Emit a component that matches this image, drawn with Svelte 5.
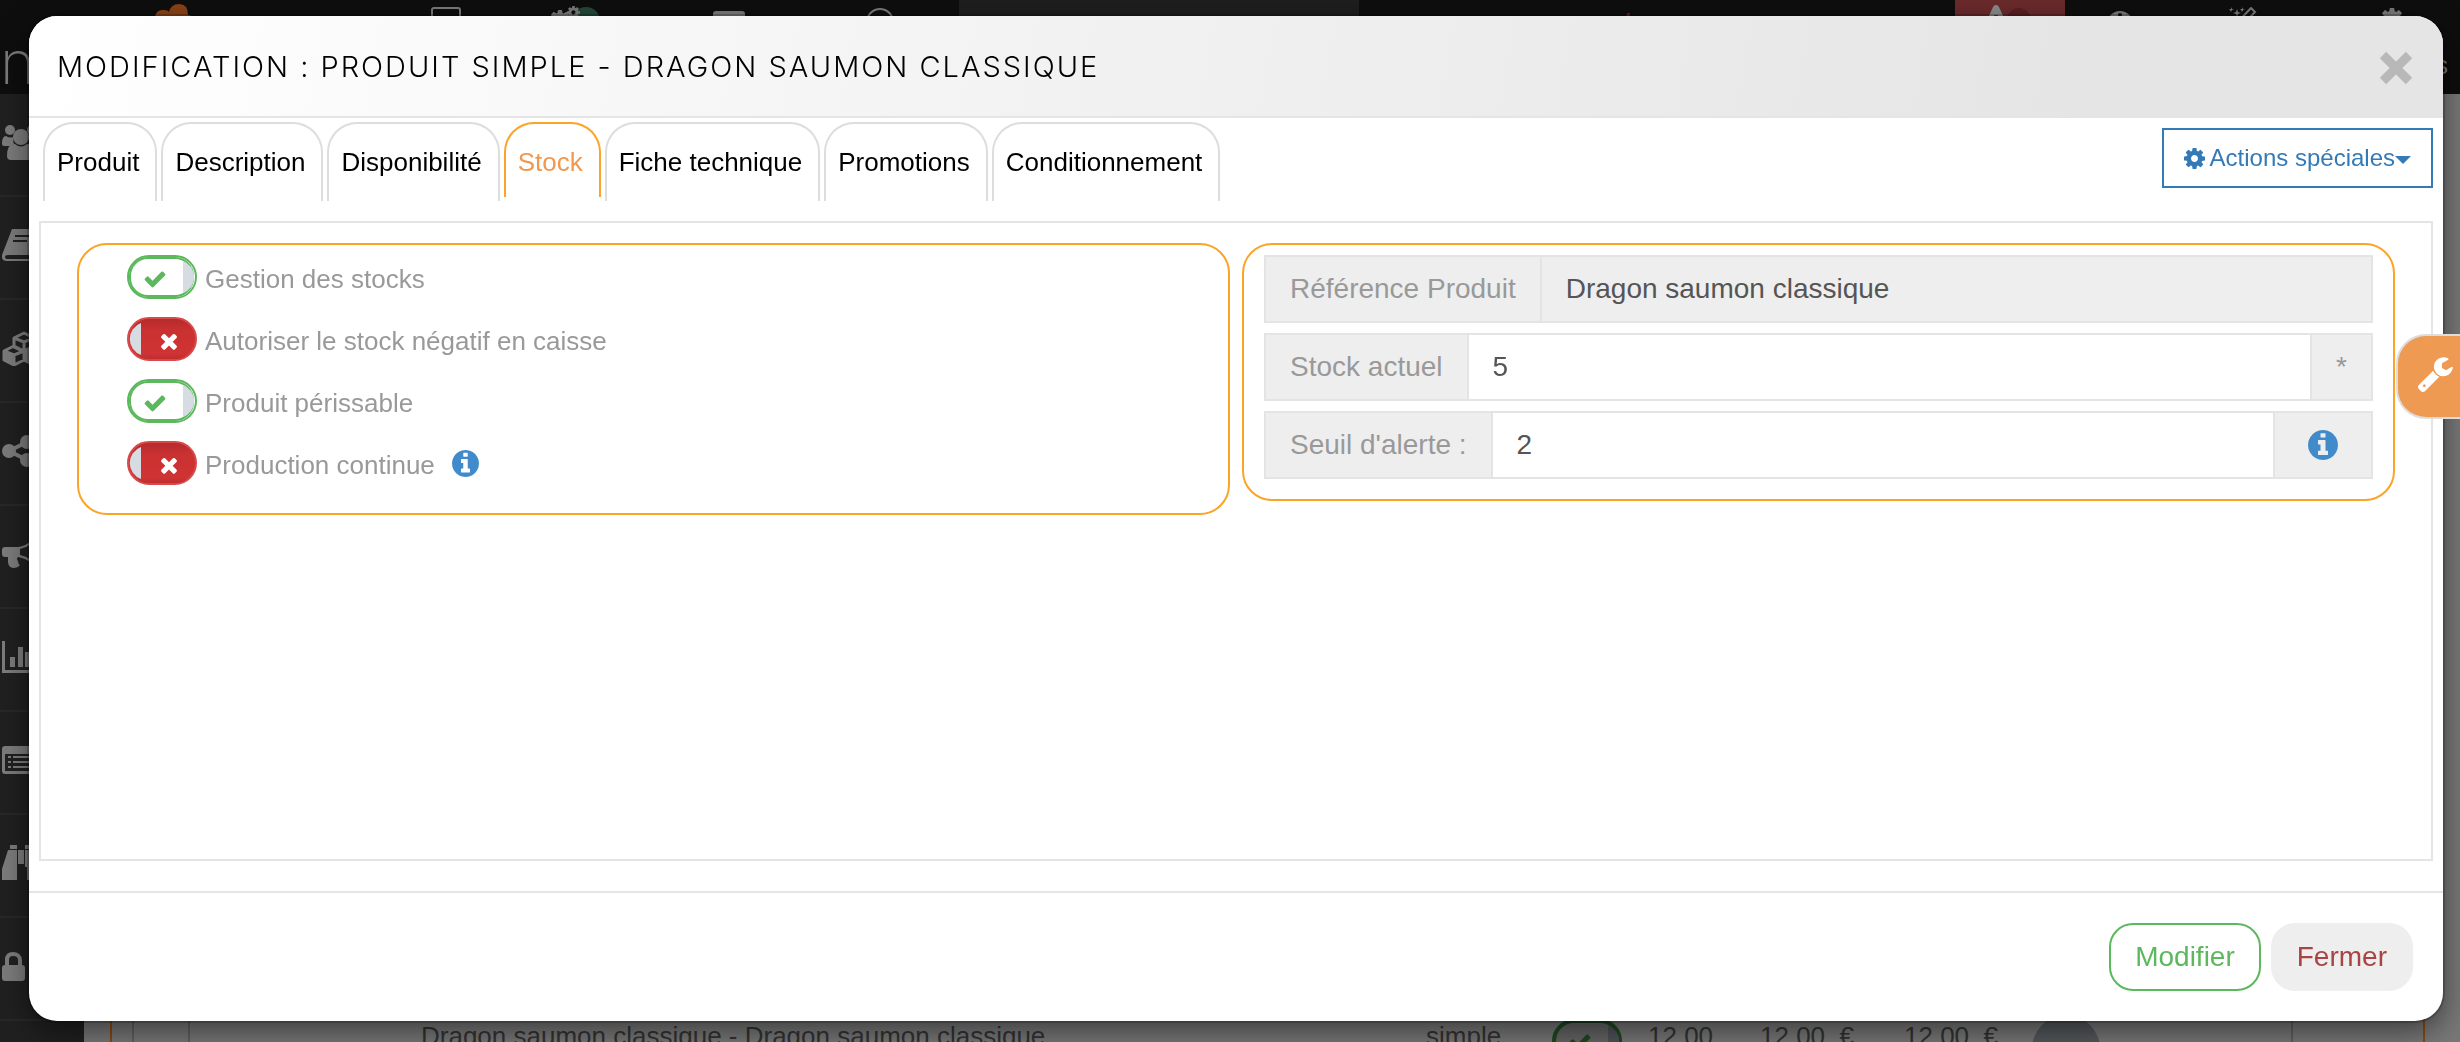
<script lang="ts">
  const icons = {
    check: 'M1671 566q0 40-28 68l-724 724-136 136q-28 28-68 28t-68-28l-136-136-362-362q-28-28-28-68t28-68l136-136q28-28 68-28t68 28l294 295 656-657q28-28 68-28t68 28l136 136q28 28 28 68z',
    times: 'M1490 1322q0 40-28 68l-136 136q-28 28-68 28t-68-28l-294-294-294 294q-28 28-68 28t-68-28l-136-136q-28-28-28-68t28-68l294-294-294-294q-28-28-28-68t28-68l136-136q28-28 68-28t68 28l294 294 294-294q28-28 68-28t68 28l136 136q28 28 28 68t-28 68l-294 294 294 294q28 28 28 68z',
    info: 'M1152 1376v-160q0-14-9-23t-23-9h-96v-512q0-14-9-23t-23-9h-320q-14 0-23 9t-9 23v160q0 14 9 23t23 9h96v320h-96q-14 0-23 9t-9 23v160q0 14 9 23t23 9h448q14 0 23-9t9-23zm-128-896v-160q0-14-9-23t-23-9h-192q-14 0-23 9t-9 23v160q0 14 9 23t23 9h192q14 0 23-9t9-23zm640 416q0 209-103 385.5t-279.5 279.5-385.5 103-385.5-103-279.5-279.5-103-385.5 103-385.5 279.5-279.5 385.5-103 385.5 103 279.5 279.5 103 385.5z',
    cog: 'M1152 896q0-106-75-181t-181-75-181 75-75 181 75 181 181 75 181-75 75-181zm512-109v222q0 12-8 23t-20 13l-185 28q-19 54-39 91 35 50 107 138 10 12 10 25t-9 23q-27 37-99 108t-94 71q-12 0-26-9l-138-108q-44 23-91 38-16 136-29 186-7 28-36 28h-222q-14 0-24.5-8.5t-11.5-21.5l-28-184q-49-16-90-37l-141 107q-10 9-25 9-14 0-25-11-126-114-165-168-7-10-7-23 0-12 8-23 15-21 51-66.5t54-70.5q-27-50-41-99l-183-27q-13-2-21-12.5t-8-23.5v-222q0-12 8-23t19-13l186-28q14-46 39-92-40-57-107-138-10-12-10-24 0-10 9-23 26-36 98.5-107.5t94.5-71.5q13 0 26 10l138 107q44-23 91-38 16-136 29-186 7-28 36-28h222q14 0 24.5 8.5t11.5 21.5l28 184q49 16 90 37l142-107q9-9 24-9 13 0 25 10 129 119 165 170 7 8 7 22 0 12-8 23-15 21-51 66.5t-54 70.5q26 50 41 98l183 28q13 2 21 12.5t8 23.5z',
    wrench: 'M448 1472q0-26-19-45t-45-19-45 19-19 45 19 45 45 19 45-19 19-45zm644-420l-682 682q-37 37-90 37-52 0-91-37l-106-108q-38-36-38-90 0-53 38-91l681-681q39 98 114.5 173.5t173.5 114.5zm634-435q0 39-23 106-47 134-164.5 217.5t-258.5 83.5q-185 0-316.5-131.5t-131.5-316.5 131.5-316.5 316.5-131.5q58 0 121.5 16.5t107.5 46.5q16 11 16 28t-16 28l-293 169v224l193 107q5-3 79-48.5t135.5-81 70.5-35.5q15 0 23.5 10t8.5 25z',
  };

  const tabs = ['Produit', 'Description', 'Disponibilité', 'Stock', 'Fiche technique', 'Promotions', 'Conditionnement'];
  let activeTab: string = $state('Stock');

  let options = $state([
    { label: 'Gestion des stocks', on: true, info: false },
    { label: 'Autoriser le stock négatif en caisse', on: false, info: false },
    { label: 'Produit périssable', on: true, info: false },
    { label: 'Production continue', on: false, info: true },
  ]);

  let reference = $state('Dragon saumon classique');
  let stock = $state('5');
  let threshold = $state('2');

  const menu = ['users', 'book', 'cubes', 'share', 'bullhorn', 'chart', 'list', 'binoculars', 'lock'];
</script>

{#snippet infoIcon(size: number)}
  <svg width={size} height={size} viewBox="128 128 1536 1536" fill="#428bca" aria-hidden="true"><path d={icons.info} /></svg>
{/snippet}

{#snippet switchArt(on: boolean)}
  <svg width="70" height="44" viewBox="0 0 70 44" aria-hidden="true">
    <defs>
      <linearGradient id="off" x1="0" y1="0" x2="0" y2="1">
        <stop offset="0" stop-color="#b32b2b" />
        <stop offset=".3" stop-color="#cb3131" />
        <stop offset=".85" stop-color="#d03333" />
        <stop offset="1" stop-color="#bb2d2d" />
      </linearGradient>
    </defs>
    {#if on}
      <rect x="1" y="1" width="68" height="42" rx="21" fill="#fff" stroke="#5cb85c" stroke-width="2" />
      <rect x="3" y="3" width="63" height="38" rx="18" fill="none" stroke="#5cb85c" stroke-width="2" />
      <path d="M56 6A17 17 0 0 1 56 38Z" fill="#d6dce2" />
      <svg x="16" y="12" width="24" height="24" viewBox="0 0 1792 1792"><path d={icons.check} fill="#5cb85c" /></svg>
    {:else}
      <rect x="1" y="1" width="68" height="42" rx="21" fill="url(#off)" stroke="#d9494b" stroke-width="2" />
      <path d="M14 6A17 17 0 0 0 14 38Z" fill="#d6dce2" />
      <svg x="30" y="12" width="24" height="24" viewBox="0 0 1792 1792"><path d={icons.times} fill="#fff" /></svg>
    {/if}
  </svg>
{/snippet}

{#snippet menuIcon(name: string)}
  <svg width="48" height="36" viewBox="0 0 48 36" fill="#7c7c7c" aria-hidden="true">
    {#if name === 'users'}
      <circle cx="8" cy="6" r="5" /><path d="M0 20q0-8 4-8 5 3 9 0-3 4-1 8l-4 2H2q-2 0-2-2z" />
      <circle cx="19" cy="13" r="8" /><path d="M5 32q0-13 8-12 6 5 12 0 8-1 8 12 0 4-4 4H9q-4 0-4-4z" />
      <circle cx="30" cy="6" r="5" />
    {:else if name === 'book'}
      <path d="M10 2h28l-8 26H6q-3 0-3 2t3 2h28v2H5q-6 0-5-6z" />
      <path d="M13 9h14M11 14h14" stroke="#202020" stroke-width="2" />
    {:else if name === 'cubes'}
      <g fill="none" stroke="#7c7c7c" stroke-width="3" stroke-linejoin="round">
        <path d="M12 8l10-5 10 5v9l-10 5-10-5zM12 8l10 4 10-4M22 12v9M2 21l10-5 10 5v9l-10 5-10-5zM2 21l10 4 10-4M12 25v9M22 21l10-5 10 5v9l-10 5-10-5zM22 21l10 4 10-4" />
      </g>
      <path d="M2 21l10 4v9L2 30zM22 21l10 4v9l-10-4z" />
    {:else if name === 'share'}
      <circle cx="7" cy="18" r="7" /><circle cx="25" cy="9" r="7" /><circle cx="25" cy="27" r="7" />
      <path d="M25 9L7 18l18 9" fill="none" stroke="#7c7c7c" stroke-width="4" />
    {:else if name === 'bullhorn'}
      <path d="M3 11h13q8-1 16-8v26q-8-7-16-8-2 2 0 4 0 3 2 4-2 3-7 3-6 0-5-11H3q-3 0-3-3v-4q0-3 3-3z" />
      <path d="M18 13q6-1 11-5v16q-5-4-11-5z" fill="#202020" />
    {:else if name === 'chart'}
      <path d="M0 2h3v29h40v3H0zM8 18h5v10H8zM16 8h5v20h-5zM23 13h5v15h-5z" />
    {:else if name === 'list'}
      <path d="M3 4h34v28H3q-3 0-3-3V7q0-3 3-3zm0 8v17h34V12z" fill-rule="evenodd" />
      <path d="M6 15h3M6 20h3M6 25h3M11 15h24M11 20h24M11 25h24" stroke="#7c7c7c" stroke-width="2" />
    {:else if name === 'binoculars'}
      <path d="M8 0h7v4H8zM23 0h7v4h-7zM6 5h9v30H0V24zM16 5h6v14h-6zM23 5h9l6 19v11H25V22h-2z" />
    {:else}
      <path d="M0 20q0-3 3-3v-5q0-8 8-8t9 8v5q3 0 3 3v10q0 3-3 3H3q-3 0-3-3zm7-3h9v-5q0-4-5-4-4 0-4 4z" fill-rule="evenodd" />
    {/if}
  </svg>
{/snippet}

<div class="page">
  <header class="topbar">
    <div class="logo">
      <svg width="40" height="36" viewBox="0 0 40 36" fill="#8a4216" aria-hidden="true"><path d="M0 12q2-7 9-6 4 0 5 2 2-8 10-8 9 0 9 11 7 1 7 7v12H0z" /></svg>
      <span>n</span>
    </div>
    <div class="screen"><svg width="30" height="30" viewBox="0 0 30 30" fill="none" stroke="#7a7a7a" stroke-width="2" aria-hidden="true"><rect x="1" y="1" width="28" height="20" rx="2" /></svg></div>
    <div class="jobs">
      <svg width="52" height="30" viewBox="0 0 52 30" aria-hidden="true">
        <circle cx="37" cy="15" r="14" fill="#23483a" />
        <svg y="4" width="22" height="22" viewBox="128 128 1536 1536"><path d={icons.cog} fill="#7a7a7a" /></svg>
        <svg x="18" width="13" height="13" viewBox="128 128 1536 1536"><path d={icons.cog} fill="#7a7a7a" /></svg>
      </svg>
    </div>
    <div class="card"><svg width="32" height="24" viewBox="0 0 32 24" aria-hidden="true"><rect width="32" height="24" rx="3" fill="#7a7a7a" /></svg></div>
    <div class="round"><svg width="28" height="28" viewBox="0 0 28 28" aria-hidden="true"><circle cx="14" cy="14" r="13" fill="none" stroke="#7a7a7a" stroke-width="2" /></svg></div>
    <div class="search"></div>
    <div class="brand"><svg width="6" height="12" viewBox="0 0 6 12" fill="#7c1414" aria-hidden="true"><path d="M2 0h3L4 12H0z" /></svg></div>
    <div class="alert">
      <svg width="60" height="30" viewBox="0 0 60 30" aria-hidden="true">
        <circle cx="39" cy="15" r="12" fill="#5a1f22" />
        <path d="M16 0q2 0 3 2l11 24H2L13 2q1-2 3-2z" fill="#8a8a8a" />
        <path d="M14 10h4l-1 9h-2z" fill="#6b2a2c" />
      </svg>
    </div>
    <div class="gauge"><svg width="26" height="24" viewBox="0 0 26 24" aria-hidden="true"><circle cx="13" cy="13" r="13" fill="#7a7a7a" /><circle cx="13" cy="4" r="2" fill="#0e0e0e" /><circle cx="5" cy="8" r="2" fill="#0e0e0e" /><circle cx="21" cy="8" r="2" fill="#0e0e0e" /></svg></div>
    <div class="wand">
      <svg width="28" height="28" viewBox="0 0 28 28" aria-hidden="true">
        <path d="M2 0l1 2 2 0-2 1-1 2-1-2-1-1 2 0zM13 0l1 2 2 0-2 1-1 2-1-2-1-1 2 0zM8 2l1 3 3 1-3 1-1 3-1-3-3-1 3-1z" fill="#7a7a7a" />
        <path d="M22 1l4 4L6 26l-4-4z" fill="none" stroke="#7a7a7a" stroke-width="2" />
      </svg>
    </div>
    <div class="settings">
      <svg width="24" height="24" viewBox="128 128 1536 1536" fill="#7a7a7a" aria-hidden="true"><path d={icons.cog} /></svg>
      <span>s</span>
    </div>
  </header>
  <div class="behind">
    <nav class="sidebar" aria-label="Menu">
      {#each menu as item}
        <div class="menuitem">{@render menuIcon(item)}</div>
      {/each}
    </nav>
    <div class="listing">
      <div class="row">
        <span class="edge"></span>
        <span class="tick"></span>
        <span class="name">Dragon saumon classique - Dragon saumon classique</span>
        <span class="kind">simple</span>
        <span class="state">
          <svg width="70" height="44" viewBox="0 0 70 44" aria-hidden="true">
            <rect x="2" y="2" width="66" height="40" rx="20" fill="#666" stroke="#1d4a20" stroke-width="4" />
            <path d="M56 6A17 17 0 0 1 56 38Z" fill="#505458" />
            <svg x="16" y="11" width="24" height="24" viewBox="0 0 1792 1792"><path d={icons.check} fill="#1d4a20" /></svg>
          </svg>
        </span>
        <span class="qty">12.00</span>
        <span class="price">12.00&nbsp; €</span>
        <span class="price">12.00&nbsp; €</span>
        <span class="more"></span>
        <span class="tail"></span>
      </div>
    </div>
  </div>
</div>

<div class="modal" role="dialog" aria-labelledby="title">
  <div class="modalheader">
    <h1 id="title">MODIFICATION : PRODUIT SIMPLE - DRAGON SAUMON CLASSIQUE</h1>
    <button type="button" class="close" aria-label="Fermer la fenêtre">
      <svg width="34" height="34" viewBox="0 0 34 34" aria-hidden="true"><path d="M4 4l26 26M30 4L4 30" stroke="#b8b8b8" stroke-width="9" /></svg>
    </button>
  </div>

  <div class="tabbar">
    <div class="tabs" role="tablist">
      {#each tabs as tab}
        <button type="button" role="tab" aria-selected={tab === activeTab} class:active={tab === activeTab} onclick={() => activeTab = tab}>{tab}</button>
      {/each}
    </div>
    <button type="button" class="actions">
      <svg width="21" height="21" viewBox="128 128 1536 1536" fill="currentColor" aria-hidden="true"><path d={icons.cog} /></svg>
      <span>Actions spéciales</span>
      <i class="caret"></i>
    </button>
  </div>

  <div class="content">
    <section class="box switches">
      {#each options as option}
        <div class="option">
          <label>
            <input type="checkbox" bind:checked={option.on}>
            {@render switchArt(option.on)}
            <span>{option.label}</span>
          </label>
          {#if option.info}{@render infoIcon(27)}{/if}
        </div>
      {/each}
    </section>
    <section class="box fields">
      <div class="group">
        <label for="reference">Référence Produit</label>
        <input id="reference" type="text" bind:value={reference} readonly>
      </div>
      <div class="group">
        <label for="stock">Stock actuel</label>
        <input id="stock" type="text" bind:value={stock}>
        <span class="addon">*</span>
      </div>
      <div class="group">
        <label for="threshold">Seuil d'alerte :</label>
        <input id="threshold" type="text" bind:value={threshold}>
        <span class="addon help">{@render infoIcon(30)}</span>
      </div>
    </section>
  </div>

  <div class="modalfooter">
    <button type="button" class="save">Modifier</button>
    <button type="button" class="cancel">Fermer</button>
  </div>
</div>

<button type="button" class="tools" aria-label="Outils">
  <svg width="35" height="35" viewBox="85 120 1650 1650" fill="#fff" aria-hidden="true"><path d={icons.wrench} /></svg>
</button>

<style>
  :global(body) {
    background: #787878;
    font-family: "Liberation Sans", Arial, sans-serif;
    font-size: 26px;
  }
  :global(#app) {
    display: flow-root;
  }
  button, input {
    font-family: inherit;
    margin: 0;
  }
  button {
    cursor: pointer;
  }
  svg {
    display: block;
    flex: none;
  }

  /* page under the dialog */
  .page {
    position: fixed;
    inset: 0;
    overflow: hidden;
    display: flex;
    flex-direction: column;
    background: #787878;
  }
  .topbar {
    display: flex;
    height: 94px;
    flex: none;
    background: #0e0e0e;
    color: #7a7a7a;
  }
  .topbar > div {
    display: flex;
    flex-direction: column;
    align-items: center;
    padding-top: 8px;
    box-sizing: border-box;
  }
  .topbar .logo {
    width: 350px;
    padding-top: 4px;
  }
  .logo span {
    align-self: flex-start;
    font: 200 60px/60px Inter, sans-serif;
    margin-top: -8px;
  }
  .topbar .screen {
    width: 192px;
    padding-top: 7px;
  }
  .topbar .jobs {
    width: 66px;
    padding-top: 6px;
  }
  .topbar .card {
    width: 242px;
    padding-top: 11px;
  }
  .round {
    width: 60px;
  }
  .search {
    width: 400px;
    margin-left: 49px;
    background: #1e1e1e;
  }
  .topbar .brand {
    flex: 1;
    padding-top: 13px;
    padding-right: 58px;
  }
  .topbar .alert {
    width: 110px;
    padding-top: 5px;
    background: #6b2a2c;
  }
  .topbar .gauge {
    width: 110px;
    padding-top: 11px;
  }
  .topbar .wand {
    width: 136px;
    padding-top: 7px;
  }
  .settings {
    width: 149px;
    padding-left: 12px;
  }
  .settings span {
    align-self: flex-end;
    margin: 18px 12px 0 0;
    line-height: 30px;
  }
  .behind {
    display: flex;
    flex: 1;
    min-height: 0;
  }
  .sidebar {
    width: 84px;
    flex: none;
    background: #202020;
  }
  .menuitem {
    display: flex;
    align-items: center;
    height: 103px;
    box-sizing: border-box;
    padding: 0 0 6px 2px;
    border-bottom: 2px solid #282828;
  }
  .listing {
    display: flex;
    flex-direction: column;
    justify-content: flex-end;
    flex: 1;
  }
  .row {
    display: flex;
    height: 23px;
    line-height: 30px;
    color: #333;
    white-space: nowrap;
  }
  .edge {
    width: 24px;
    margin-left: 26px;
    box-sizing: border-box;
    border-left: 2px solid #8a4a10;
    border-right: 2px solid #606060;
  }
  .tick {
    width: 54px;
    border-right: 2px solid #606060;
  }
  .name {
    flex: 1;
    padding: 2px 0 0 231px;
  }
  .kind {
    width: 126px;
    padding-top: 2px;
  }
  .state {
    width: 96px;
  }
  .qty {
    width: 112px;
    padding-top: 2px;
  }
  .price {
    width: 144px;
    padding-top: 2px;
  }
  .more {
    width: 68px;
    height: 68px;
    border-radius: 50%;
    margin: -4px 191px 0 -16px;
    background: #55595d;
  }
  .tail {
    width: 130px;
    margin-right: 35px;
    border-left: 2px solid #606060;
    border-right: 2px solid #8a4a10;
  }

  /* dialog */
  .modal {
    position: relative;
    display: flex;
    flex-direction: column;
    min-height: calc(100vh - 37px);
    margin: 16px 17px 21px 29px;
    border-radius: 28px;
    background: #fff;
    box-shadow: 0 0 0 2px rgba(0, 0, 0, .2), 0 10px 30px rgba(0, 0, 0, .5);
  }
  .modalheader {
    display: flex;
    align-items: center;
    justify-content: space-between;
    height: 100px;
    padding: 0 30px 0 28px;
    border-bottom: 2px solid #e5e5e5;
    border-radius: 28px 28px 0 0;
    background: linear-gradient(100deg, #fff, #e5e5e5 85%);
  }
  h1 {
    margin: 0;
    font-family: Inter, "Liberation Sans", sans-serif;
    font-weight: 300;
    font-size: 29px;
    letter-spacing: 2px;
    color: #000;
  }
  .close {
    border: none;
    background: none;
    padding: 4px 0 0;
  }
  .tabbar {
    display: flex;
    justify-content: space-between;
    align-items: flex-start;
    padding: 4px 10px 20px 14px;
  }
  .tabs {
    display: flex;
    align-items: flex-start;
    gap: 4px;

    & button {
      height: 79px;
      padding: 0 16px 0 12px;
      border: 2px solid #ddd;
      border-bottom: none;
      border-radius: 30px 30px 0 0;
      background: #fff;
      color: #000;
      font-size: 26px;
    }
    & .active {
      height: 75px;
      padding-top: 4px;
      border-color: #fba428;
      color: #f0984f;
    }
  }
  .actions {
    display: flex;
    align-items: center;
    height: 60px;
    margin-top: 6px;
    padding: 0 20px;
    border: 2px solid #337ab7;
    background: #fff;
    color: #337ab7;
    font-size: 24px;

    & span {
      margin-left: 5px;
    }
  }
  .caret {
    border: 8px solid transparent;
    border-top-color: #337ab7;
    border-bottom: none;
    margin-top: 4px;
  }
  .content {
    display: grid;
    grid-template-columns: 1fr 1fr;
    align-items: start;
    gap: 12px;
    flex: 1;
    margin: 0 10px;
    padding: 20px 36px;
    border: 2px solid #e4e4e4;
  }
  .box {
    display: flex;
    flex-direction: column;
    min-width: 0;
    box-sizing: border-box;
    border: 2px solid #fba428;
    border-radius: 30px;
  }
  .switches {
    gap: 18px;
    padding: 10px 20px 28px 48px;
  }
  .option {
    display: flex;
    align-items: center;
    gap: 17px;
    color: #999;

    & label {
      display: flex;
      align-items: center;
      gap: 8px;
      position: relative;
      cursor: pointer;
    }
    & input {
      position: absolute;
      width: 70px;
      height: 44px;
      opacity: 0;
    }
    & span {
      padding-top: 4px;
      line-height: 30px;
    }
  }
  .fields {
    gap: 10px;
    padding: 10px 20px 20px;
  }
  .group {
    display: flex;
    height: 64px;
    border: 2px solid #e4e4e4;
    color: #999;
    font-size: 28px;

    & label, & .addon {
      display: flex;
      align-items: center;
      padding: 0 24px;
      background: #eee;
    }
    & input {
      flex: 1;
      min-width: 0;
      padding: 0 24px;
      border: none;
      border-left: 2px solid #e4e4e4;
      background: #fff;
      color: #555;
      font-size: 28px;
    }
    & input:read-only {
      background: #eee;
    }
    & .addon {
      border-left: 2px solid #e4e4e4;
    }
    & .help {
      padding: 0 33px;
    }
  }
  .modalfooter {
    display: flex;
    justify-content: flex-end;
    gap: 10px;
    margin-top: 30px;
    padding: 30px;
    border-top: 2px solid #e5e5e5;

    & button {
      height: 68px;
      padding: 0 24px;
      border: 2px solid #eee;
      border-radius: 24px;
      font-size: 28px;
    }
    & .save {
      border-color: #5cb85c;
      background: #fff;
      color: #5cb85c;
    }
    & .cancel {
      background: #eee;
      color: #a94442;
    }
  }
  .tools {
    position: fixed;
    right: 0;
    top: 334px;
    height: 85px;
    padding: 0 7px 4px 20px;
    border: 2px solid #ddd;
    border-right: none;
    border-radius: 30px 0 0 30px;
    background: #ef9a52;
  }
</style>
